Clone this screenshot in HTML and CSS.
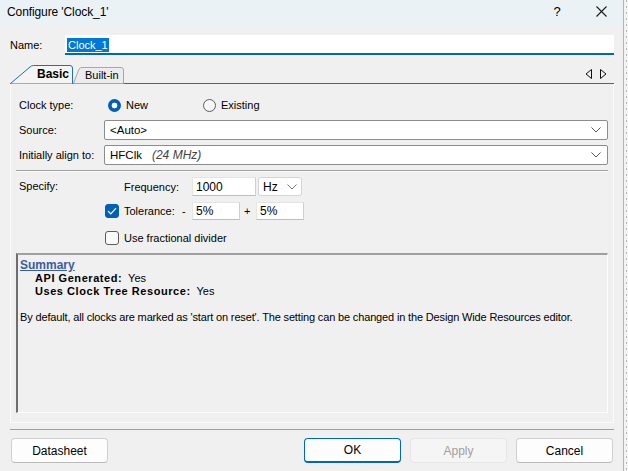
FILE: index.html
```html
<!DOCTYPE html>
<html>
<head>
<meta charset="utf-8">
<link rel="stylesheet" href="styles.css">
</head>
<body>
<div class="window">
  <div class="dialog">
    <header class="titlebar">
      <span class="title">Configure 'Clock_1'</span>
      <div class="title-actions">
        <span class="tb-btn help">?</span>
        <span class="tb-btn close"><svg width="11" height="11" viewBox="0 0 11 11"><path d="M0.5 0.5L10.5 10.5M10.5 0.5L0.5 10.5" stroke="#1a1a1a" stroke-width="1.1" fill="none"/></svg></span>
      </div>
    </header>

    <div class="namebar">
      <span class="name-label">Name:</span>
      <div class="name-input"><span class="sel">Clock_1</span></div>
    </div>

    <div class="tabstrip">
      <div class="tab tab-active">
        <svg class="tab-shape" width="64" height="19" viewBox="0 0 64 19"><path d="M0.5 18.5 L20 2 Q21.5 0.5 23.5 0.5 L60 0.5 Q62.5 0.5 62.5 3 L62.5 18.5" stroke="#1c6fc6" fill="#f4f4f4"/></svg>
        <span class="tab-text">Basic</span>
      </div>
      <div class="tab tab-inactive">
        <svg class="tab-shape" width="52" height="17" viewBox="0 0 52 17"><path d="M0.5 16.5 L6 2 Q7 0.5 9 0.5 L48 0.5 Q50.5 0.5 50.5 3 L50.5 16.5" stroke="#a8a8a8" fill="#ececec"/></svg>
        <span class="tab-text">Built-in</span>
      </div>
      <div class="tab-arrows">
        <svg width="22" height="10" viewBox="0 0 22 10"><path d="M6.5 0.5 L1 5 L6.5 9.5 Z" stroke="#111" fill="none"/><path d="M15.5 0.5 L21 5 L15.5 9.5 Z" stroke="#111" fill="none"/></svg>
      </div>
    </div>

    <div class="panel">
      <div class="row row-clock">
        <span class="lbl">Clock type:</span>
        <div class="radio-opt opt-new"><span class="radio on"></span><span>New</span></div>
        <div class="radio-opt"><span class="radio"></span><span>Existing</span></div>
      </div>

      <div class="row row-combo first">
        <span class="lbl">Source:</span>
        <div class="combo"><span>&lt;Auto&gt;</span><svg class="chev" width="10" height="6" viewBox="0 0 10 6"><path d="M0.5 0.5 L5 5 L9.5 0.5" stroke="#555" fill="none"/></svg></div>
      </div>
      <div class="row row-combo">
        <span class="lbl">Initially align to:</span>
        <div class="combo"><span>HFClk</span><em class="mhz">(24 MHz)</em><svg class="chev" width="10" height="6" viewBox="0 0 10 6"><path d="M0.5 0.5 L5 5 L9.5 0.5" stroke="#555" fill="none"/></svg></div>
      </div>

      <div class="sep"></div>

      <div class="specify">
        <span class="lbl spec-lbl">Specify:</span>
        <div class="spec-rows">
          <div class="spec-row row-freq">
            <span class="chk-slot"></span>
            <span class="field-lbl">Frequency:</span>
            <div class="tbox w-freq">1000</div>
            <div class="sel-box"><span>Hz</span><svg class="chev" width="10" height="6" viewBox="0 0 10 6"><path d="M0.5 0.5 L5 5 L9.5 0.5" stroke="#777" fill="none"/></svg></div>
          </div>
          <div class="spec-row row-tol">
            <span class="chk-slot"><span class="chk on"><svg width="10" height="8" viewBox="0 0 10 8"><path d="M1 4 L3.8 6.8 L9 1.2" stroke="#fff" stroke-width="1.2" fill="none"/></svg></span></span>
            <span class="field-lbl tol-lbl">Tolerance:</span>
            <span class="sign minus">-</span>
            <div class="tbox w-tol">5%</div>
            <span class="sign plus">+</span>
            <div class="tbox w-tol">5%</div>
          </div>
          <div class="spec-row row-frac">
            <span class="chk-slot"><span class="chk"></span></span>
            <span class="field-lbl">Use fractional divider</span>
          </div>
        </div>
      </div>

      <div class="summary">
        <div class="sum-title">Summary</div>
        <div class="sum-line"><b>API Generated:</b>&nbsp; Yes</div>
        <div class="sum-line"><b>Uses Clock Tree Resource:</b>&nbsp; Yes</div>
        <div class="sum-note">By default, all clocks are marked as 'start on reset'. The setting can be changed in the Design Wide Resources editor.</div>
      </div>
    </div>

    <div class="footer-sep"></div>
    <div class="footer">
      <button class="btn">Datasheet</button>
      <div class="spacer"></div>
      <button class="btn btn-default">OK</button>
      <button class="btn btn-disabled">Apply</button>
      <button class="btn">Cancel</button>
    </div>
  </div>
  <div class="edge"></div>
</div>
</body>
</html>
```

FILE: styles.css
```css
* { box-sizing: border-box; }
html, body { margin: 0; padding: 0; }
body {
  width: 628px;
  height: 471px;
  overflow: hidden;
  background: #f0f0f0;
  font-family: "Liberation Sans", Arial, sans-serif;
  font-size: 11px;
  color: #000;
}
.window { display: flex; height: 471px; }
.dialog {
  width: 623px;
  display: flex;
  flex-direction: column;
  background: #f0f0f0;
}
.edge {
  width: 5px;
  border-left: 1px solid #b4b4b4;
  background: linear-gradient(to right, #f3f3f3 0 2px, transparent 2px 3px, #f3f3f3 3px),
              repeating-linear-gradient(to bottom, #b8b8b8 0 2px, #f3f3f3 2px 6px);
}

/* title bar */
.titlebar {
  height: 26px;
  background: #eaf2f6;
  display: flex;
  align-items: center;
  padding-left: 7px;
}
.title { font-size: 12px; margin-top: -3px; letter-spacing: -0.1px; }
.title-actions { margin-left: auto; display: flex; height: 26px; }
.tb-btn {
  width: 44px;
  display: flex;
  align-items: center;
  justify-content: center;
}
.help { font-size: 13px; margin-top: -4px; }
.close { margin-top: -4px; }

/* name */
.namebar {
  display: flex;
  align-items: center;
  margin-top: 9px;
  height: 20px;
}
.name-label { width: 65px; padding-left: 10px; }
.name-input {
  width: 549px;
  height: 20px;
  background: #fff;
  border-bottom: 2px solid #0067c0;
  padding: 2px 2px 0 2px;
  display: flex;
  align-items: center;
}
.sel {
  background: #0078d7;
  color: #fff;
  padding: 0 1px;
  line-height: 14px;
  font-size: 11px;
}

/* tabs */
.tabstrip {
  margin: 10px 0 0 10px;
  width: 604px;
  height: 19px;
  border-bottom: 1px solid #1c6fc6;
  display: flex;
  align-items: flex-end;
}
.tab { position: relative; display: flex; align-items: center; }
.tab-shape { position: absolute; left: 0; bottom: -1px; }
.tab-text { position: relative; }
.tab-active { width: 63px; height: 18px; padding-left: 27px; font-weight: bold; font-size: 12px; }
.tab-inactive { width: 51px; height: 16px; padding-left: 12px; }
.tab-arrows { margin-left: auto; margin-right: 7px; align-self: center; height: 10px; display: flex; }

/* panel */
.panel {
  margin-left: 10px;
  width: 604px;
  height: 339px;
  border: 1px solid #fbfbfb;
  border-top: none;
  padding: 13px 5px 0 5px;
  display: flex;
  flex-direction: column;
}
.row { display: flex; align-items: center; }
.lbl { width: 88px; padding-left: 3px; flex: none; }
.row-clock { height: 16px; }
.radio-opt { display: flex; align-items: center; gap: 5px; }
.opt-new { width: 95px; margin-left: 4px; }
.radio {
  width: 13px; height: 13px;
  border-radius: 50%;
  border: 1px solid #5c5c5c;
  background: #f7f7f7;
  display: inline-block;
}
.radio.on {
  border: none;
  background: radial-gradient(circle, #fff 0 2.6px, #005fb8 3.2px);
}
.row-combo { height: 20px; margin-top: 5px; }
.row-combo.first { margin-top: 7px; }
.combo {
  flex: 1;
  height: 20px;
  background: #fff;
  border: 1px solid #8c8c8c;
  border-radius: 2px;
  display: flex;
  align-items: center;
  padding: 0 5px;
  font-size: 11.5px;
}
.combo .chev { margin-left: auto; margin-right: 1px; }
.mhz { margin-left: 10px; color: #444; font-size: 12px; }
.sep {
  height: 2px;
  margin-top: 5px;
  border-top: 1px solid #a0a0a0;
  border-bottom: 1px solid #fafafa;
}

/* specify */
.specify { display: flex; margin-top: 5px; }
.spec-lbl { padding-top: 3px; }
.spec-rows { display: flex; flex-direction: column; }
.spec-row { display: flex; align-items: center; }
.chk-slot { width: 20px; display: flex; padding-left: 1px; }
.row-freq { height: 19px; }
.row-tol { height: 18px; margin-top: 6px; }
.row-frac { height: 14px; margin-top: 11px; }
.field-lbl { width: 68px; }
.tol-lbl { width: 58px; }
.sign { width: 10px; }
.plus { width: 16px; padding-left: 4px; }
.tbox {
  height: 100%;
  background: #fff;
  border: 1px solid #e4e4e4;
  border-right-color: #cfcfcf;
  border-bottom-color: #bdbdbd;
  display: flex;
  align-items: center;
  padding-left: 3px;
  font-size: 12px;
}
.w-freq { width: 64px; margin-right: 2px; }
.w-tol { width: 48px; }
.sel-box {
  width: 44px;
  height: 100%;
  background: #fff;
  border: 1px solid #d4d4d4;
  border-radius: 3px;
  display: flex;
  align-items: center;
  padding: 0 4px;
  font-size: 12px;
}
.sel-box .chev { margin-left: auto; }
.chk {
  width: 14px; height: 14px;
  border-radius: 3px;
  border: 1px solid #5c5c5c;
  background: #f9f9f9;
  display: flex;
  align-items: center;
  justify-content: center;
}
.chk.on { background: #005fb8; border-color: #005fb8; }
.row-frac .field-lbl { width: auto; }

/* summary */
.summary {
  margin-top: 8px;
  height: 160px;
  border-top: 2px solid #a0a0a0;
  border-left: 2px solid #6e6e6e;
  border-right: 1px solid #fdfdfd;
  border-bottom: 1px solid #fdfdfd;
  padding: 4px 0 0 2px;
  line-height: 13px;
  font-size: 11px;
}
.sum-title {
  font-weight: bold;
  color: #3b5ba5;
  text-decoration: underline;
  font-size: 12px;
  line-height: 13px;
}
.sum-line { padding-left: 15px; }
.sum-line b { letter-spacing: 0.55px; }
.sum-note { margin-top: 13px; letter-spacing: -0.15px; }

/* footer */
.footer-sep {
  margin: 6px 0 0 10px;
  width: 604px;
  height: 1px;
  background: #a0a0a0;
}
.footer {
  display: flex;
  margin-top: 8px;
  padding: 0 10px 0 11px;
  gap: 9px;
}
.spacer { flex: 1; }
.btn {
  width: 97px;
  height: 25px;
  font-family: "Liberation Sans", Arial, sans-serif;
  font-size: 12px;
  background: #fdfdfd;
  border: 1px solid #d0d0d0;
  border-bottom-color: #bcbcbc;
  border-radius: 4px;
  color: #000;
  padding: 0;
}
.btn-default { border: 1px solid #0067c0; border-bottom-width: 2px; }
.btn-disabled { background: #f5f5f5; border-color: #e6e6e6; color: #a0a0a0; }
```
